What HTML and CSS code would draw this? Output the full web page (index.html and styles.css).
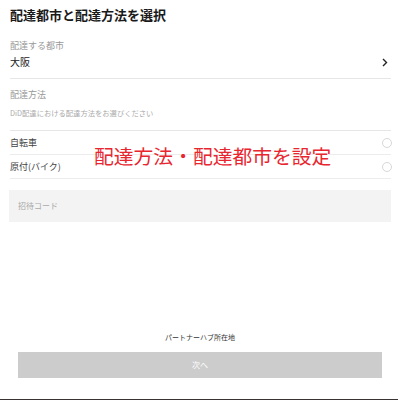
FILE: index.html
```html
<!DOCTYPE html>
<html lang="ja">
<head>
    <meta charset="UTF-8">
    <meta name="viewport" content="width=device-width, initial-scale=1.0">
    <title>配達都市と配達方法を選択</title>
    <link rel="stylesheet" href="styles.css">
</head>
<body>

<div class="page">
    <div class="content">
        <h1 class="title">配達都市と配達方法を選択</h1>

        <div class="section city">
            <div class="label">配達する都市</div>
            <div class="value-row">
                <span class="value">大阪</span>
                <svg class="chevron" width="6" height="9" viewBox="0 0 6 9">
                    <path d="M1 1 L4.5 4.5 L1 8" fill="none" stroke="#222" stroke-width="1.4"/>
                </svg>
            </div>
        </div>

        <div class="section method">
            <div class="label">配達方法</div>
            <div class="desc">DiD配達における配達方法をお選びください</div>
        </div>

        <div class="option">
            <span>自転車</span>
            <span class="radio"></span>
        </div>
        <div class="option">
            <span>原付(バイク)</span>
            <span class="radio"></span>
        </div>

        <div class="invite">招待コード</div>
    </div>

    <div class="footer">
        <div class="hub">パートナーハブ所在地</div>
        <div class="next-btn">次へ</div>
    </div>
    <div class="bottom-bar"></div>

    <div class="annotation">配達方法・配達都市を設定</div>
</div>

</body>
</html>
```

FILE: styles.css
```css
body {
    margin: 0;
    padding: 0;
    font-family: "Noto Sans CJK JP", "Noto Sans", sans-serif;
    color: #222;
    background: #fff;
}

.page {
    position: relative;
    height: 400px;
    display: flex;
    flex-direction: column;
}

.content {
    padding: 0 7px 0 10px;
}

.title {
    margin: 0;
    font-size: 13px;
    font-weight: bold;
    line-height: 30px;
    color: #1a1a1a;
}

.section {
    border-bottom: 1px solid #e6e6e6;
}

.city {
    padding: 8px 0 8px 0;
}

.method {
    padding: 8px 0 11px 0;
}

.label {
    font-size: 9px;
    line-height: 16px;
    color: #999;
}

.value-row {
    display: flex;
    justify-content: space-between;
    align-items: center;
    height: 16px;
}

.value {
    font-size: 10px;
    line-height: 16px;
    color: #222;
}

.chevron {
    margin-right: 3px;
}

.desc {
    margin-top: 4px;
    font-size: 7.3px;
    line-height: 12px;
    color: #aaa;
}

.option {
    display: flex;
    justify-content: space-between;
    align-items: center;
    height: 23px;
    border-bottom: 1px solid #ececec;
    font-size: 9px;
    color: #444;
}

.radio {
    width: 8px;
    height: 8px;
    border: 1px solid #d8d8d8;
    border-radius: 50%;
    margin-right: -1px;
}

.invite {
    margin: 11px 0 0 -1px;
    height: 32px;
    line-height: 32px;
    padding-left: 9px;
    background: #f3f3f3;
    font-size: 8px;
    color: #aaa;
}

.footer {
    margin-top: auto;
    padding: 0 16px 21px 18px;
}

.hub {
    text-align: center;
    font-size: 7px;
    line-height: 14px;
    color: #333;
    margin-bottom: 8px;
}

.next-btn {
    height: 26px;
    line-height: 26px;
    background: #cccccc;
    color: #fff;
    text-align: center;
    font-size: 8px;
}

.bottom-bar {
    height: 1px;
    background: #3a3333;
}

.annotation {
    position: absolute;
    left: 94px;
    top: 144px;
    font-size: 19.8px;
    line-height: 24px;
    color: #e8262f;
    white-space: nowrap;
}
```
